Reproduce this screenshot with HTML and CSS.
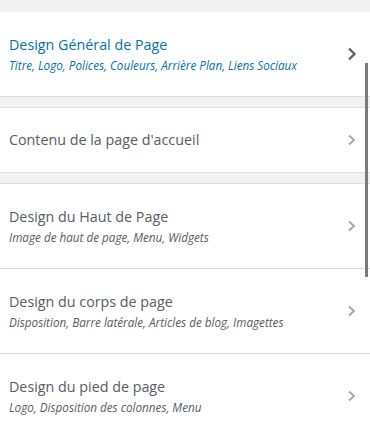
FILE: index.html
```html
<!DOCTYPE html>
<html lang="fr">
<head>
<meta charset="utf-8">
<link rel="stylesheet" href="styles.css">
</head>
<body>
<div class="panel">
  <div class="section first">
    <div class="row tall active">
      <div class="text">
        <div class="title">Design Général de Page</div>
        <div class="sub">Titre, Logo, Polices, Couleurs, Arrière Plan, Liens Sociaux</div>
      </div>
      <svg class="chev" width="10" height="14" viewBox="0 0 10 14"><polyline points="2,1.5 7.5,7 2,12.5" fill="none" stroke="currentColor" stroke-width="2.2"/></svg>
    </div>
  </div>
  <div class="section">
    <div class="row short">
      <div class="text">
        <div class="title">Contenu de la page d'accueil</div>
      </div>
      <svg class="chev" width="10" height="14" viewBox="0 0 10 14"><polyline points="2,2.5 7,7 2,11.5" fill="none" stroke="currentColor" stroke-width="1.8"/></svg>
    </div>
  </div>
  <div class="section last">
    <div class="row tall">
      <div class="text">
        <div class="title">Design du Haut de Page</div>
        <div class="sub">Image de haut de page, Menu, Widgets</div>
      </div>
      <svg class="chev" width="10" height="14" viewBox="0 0 10 14"><polyline points="2,2.5 7,7 2,11.5" fill="none" stroke="currentColor" stroke-width="1.8"/></svg>
    </div>
    <div class="row tall">
      <div class="text">
        <div class="title">Design du corps de page</div>
        <div class="sub">Disposition, Barre latérale, Articles de blog, Imagettes</div>
      </div>
      <svg class="chev" width="10" height="14" viewBox="0 0 10 14"><polyline points="2,2.5 7,7 2,11.5" fill="none" stroke="currentColor" stroke-width="1.8"/></svg>
    </div>
    <div class="row tall">
      <div class="text">
        <div class="title">Design du pied de page</div>
        <div class="sub">Logo, Disposition des colonnes, Menu</div>
      </div>
      <svg class="chev" width="10" height="14" viewBox="0 0 10 14"><polyline points="2,2.5 7,7 2,11.5" fill="none" stroke="currentColor" stroke-width="1.8"/></svg>
    </div>
  </div>
  <div class="scrollbar"></div>
</div>
</body>
</html>
```
FILE: styles.css
```css
html, body {
  margin: 0;
  padding: 0;
  background: #f1f1f1;
}
body {
  font-family: "Open Sans", "Noto Sans", sans-serif;
  width: 370px;
  height: 426px;
  overflow: hidden;
}
.panel {
  position: relative;
  padding-top: 12px;
  height: 414px;
}
.section {
  background: #fff;
  border-top: 1px solid #ddd;
  border-bottom: 1px solid #ddd;
  margin-bottom: 10px;
}
.section.first {
  border-top: none;
}
.section.last {
  border-bottom: none;
}
.row {
  display: flex;
  align-items: center;
  justify-content: space-between;
  padding: 0 13px 0 9px;
  border-bottom: 1px solid #ddd;
}
.row:last-child {
  border-bottom: none;
}
.row.tall {
  height: 84px;
}
.row.short {
  height: 64px;
}
.title {
  font-size: 14.3px;
  color: #555d66;
  line-height: 20px;
}
.sub {
  font-size: 11.7px;
  font-style: italic;
  color: #555d66;
  line-height: 16px;
  margin-top: 2px;
}
.active .title,
.active .sub {
  color: #0073aa;
}
.chev {
  color: #a0a5aa;
  flex-shrink: 0;
}
.active .chev {
  color: #555d66;
}
.scrollbar {
  position: absolute;
  left: 365px;
  top: 63px;
  width: 3px;
  height: 214px;
  background: #7a7a7a;
}
```
